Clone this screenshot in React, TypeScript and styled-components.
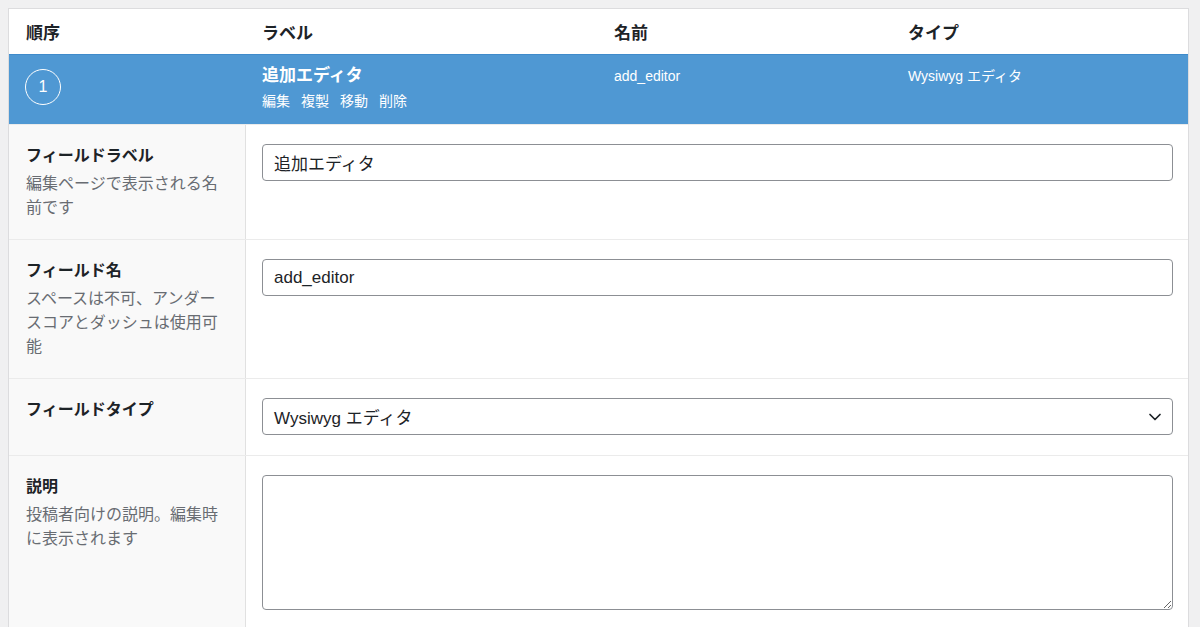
import React from "react";
import styled, { createGlobalStyle } from "styled-components";

const GlobalStyle = createGlobalStyle`
    body {
        margin: 0;
        background: #f0f0f1;
        font-family: "Liberation Sans", "Noto Sans CJK JP", sans-serif;
        color: #1d2327;
    }
`;

interface FieldRow {
    title: string;
    desc?: string;
    kind: "input" | "select" | "textarea";
    value: string;
}

const fieldRows: Array<FieldRow> = [
    { title: "フィールドラベル", desc: "編集ページで表示される名前です", kind: "input", value: "追加エディタ" },
    { title: "フィールド名", desc: "スペースは不可、アンダースコアとダッシュは使用可能", kind: "input", value: "add_editor" },
    { title: "フィールドタイプ", kind: "select", value: "Wysiwyg エディタ" },
    { title: "説明", desc: "投稿者向けの説明。編集時に表示されます", kind: "textarea", value: "" },
];

export default function App() {
    return (
        <>
            <GlobalStyle />
            <Panel>
                <HeadRow>
                    <HeadCell $pad={17}>順序</HeadCell>
                    <HeadCell>ラベル</HeadCell>
                    <HeadCell>名前</HeadCell>
                    <HeadCell>タイプ</HeadCell>
                </HeadRow>
                <Handle>
                    <HandleCell $pad={16}>
                        <OrderBadge>1</OrderBadge>
                    </HandleCell>
                    <HandleCell>
                        <FieldTitle>追加エディタ</FieldTitle>
                        <Actions>
                            <span>編集</span>
                            <span>複製</span>
                            <span>移動</span>
                            <span>削除</span>
                        </Actions>
                    </HandleCell>
                    <HandleCell>
                        <HandleText>add_editor</HandleText>
                    </HandleCell>
                    <HandleCell>
                        <HandleText>Wysiwyg エディタ</HandleText>
                    </HandleCell>
                </Handle>
                {fieldRows.map(row => <SettingRow key={row.title} {...row} />)}
            </Panel>
        </>
    );
}

const SettingRow = (props: FieldRow) => {
    return (
        <Row>
            <LabelCell>
                <LabelTitle>{props.title}</LabelTitle>
                {props.desc && <LabelDesc>{props.desc}</LabelDesc>}
            </LabelCell>
            <ValueCell>
                {props.kind === "input" && <TextInput type="text" defaultValue={props.value} />}
                {props.kind === "select" && (
                    <SelectBox>
                        <span>{props.value}</span>
                        <svg width="16" height="16" viewBox="0 0 16 16" fill="none">
                            <path d="M3 5.5 L8 10.5 L13 5.5" stroke="#1d2327" strokeWidth="1.7" strokeLinecap="round" strokeLinejoin="round" />
                        </svg>
                    </SelectBox>
                )}
                {props.kind === "textarea" && <TextArea defaultValue={props.value} />}
            </ValueCell>
        </Row>
    );
}

const Panel = styled.div`
    margin: 8px 11px 0 8px;
    border: 1px solid #dcdcde;
    border-bottom: none;
    background: #fff;
`;

const HeadRow = styled.div`
    display: grid;
    grid-template-columns: 237px 352px 294px 1fr;
    height: 45px;
    align-items: center;
`;

const HeadCell = styled.div<{ $pad?: number }>`
    padding-left: ${p => p.$pad ?? 16}px;
    font-size: 17px;
    font-weight: bold;
    color: #1d2327;
`;

const Handle = styled.div`
    display: grid;
    grid-template-columns: 237px 352px 294px 1fr;
    height: 70px;
    box-sizing: border-box;
    background: #4f98d3;
    border-top: 1px solid #3f8bcb;
    color: #fff;
`;

const HandleCell = styled.div<{ $pad?: number }>`
    padding: 9px 0 0 ${p => p.$pad ?? 16}px;
`;

const OrderBadge = styled.div`
    width: 36px;
    height: 36px;
    margin-top: 5px;
    box-sizing: border-box;
    border: 1.5px solid #fff;
    border-radius: 50%;
    display: flex;
    align-items: center;
    justify-content: center;
    font-size: 16px;
`;

const FieldTitle = styled.div`
    font-size: 17px;
    font-weight: bold;
    line-height: 24px;
`;

const Actions = styled.div`
    display: flex;
    gap: 11px;
    font-size: 14px;
    line-height: 24px;
    margin-top: 1px;
`;

const HandleText = styled.div`
    font-size: 14px;
    line-height: 24px;
`;

const Row = styled.div`
    display: grid;
    grid-template-columns: 237px 1fr;
    border-top: 1px solid #ebebeb;
`;

const LabelCell = styled.div`
    background: #f9f9f9;
    border-right: 1px solid #e1e1e1;
    padding: 19px 17px 19px 17px;
    box-sizing: border-box;
`;

const LabelTitle = styled.div`
    font-size: 16px;
    font-weight: bold;
    line-height: 24px;
    color: #1d2327;
`;

const LabelDesc = styled.div`
    margin-top: 4px;
    font-size: 16px;
    line-height: 24px;
    color: #686c72;
`;

const ValueCell = styled.div`
    padding: 19px 15px 20px 16px;
`;

const TextInput = styled.input`
    display: block;
    width: 100%;
    height: 37px;
    box-sizing: border-box;
    border: 1px solid #8c8f94;
    border-radius: 4px;
    padding: 0 11px;
    font-family: "Liberation Sans", "Noto Sans CJK JP", sans-serif;
    font-size: 17px;
    color: #1d2327;
    background: #fff;
`;

const SelectBox = styled.div`
    display: flex;
    align-items: center;
    justify-content: space-between;
    height: 37px;
    box-sizing: border-box;
    border: 1px solid #8c8f94;
    border-radius: 4px;
    padding: 0 9px 0 11px;
    font-size: 17px;
    color: #1d2327;
`;

const TextArea = styled.textarea`
    display: block;
    width: 100%;
    height: 135px;
    box-sizing: border-box;
    border: 1px solid #8c8f94;
    border-radius: 4px;
    padding: 8px 11px;
    font-family: "Liberation Sans", "Noto Sans CJK JP", sans-serif;
    font-size: 17px;
    resize: vertical;
`;
